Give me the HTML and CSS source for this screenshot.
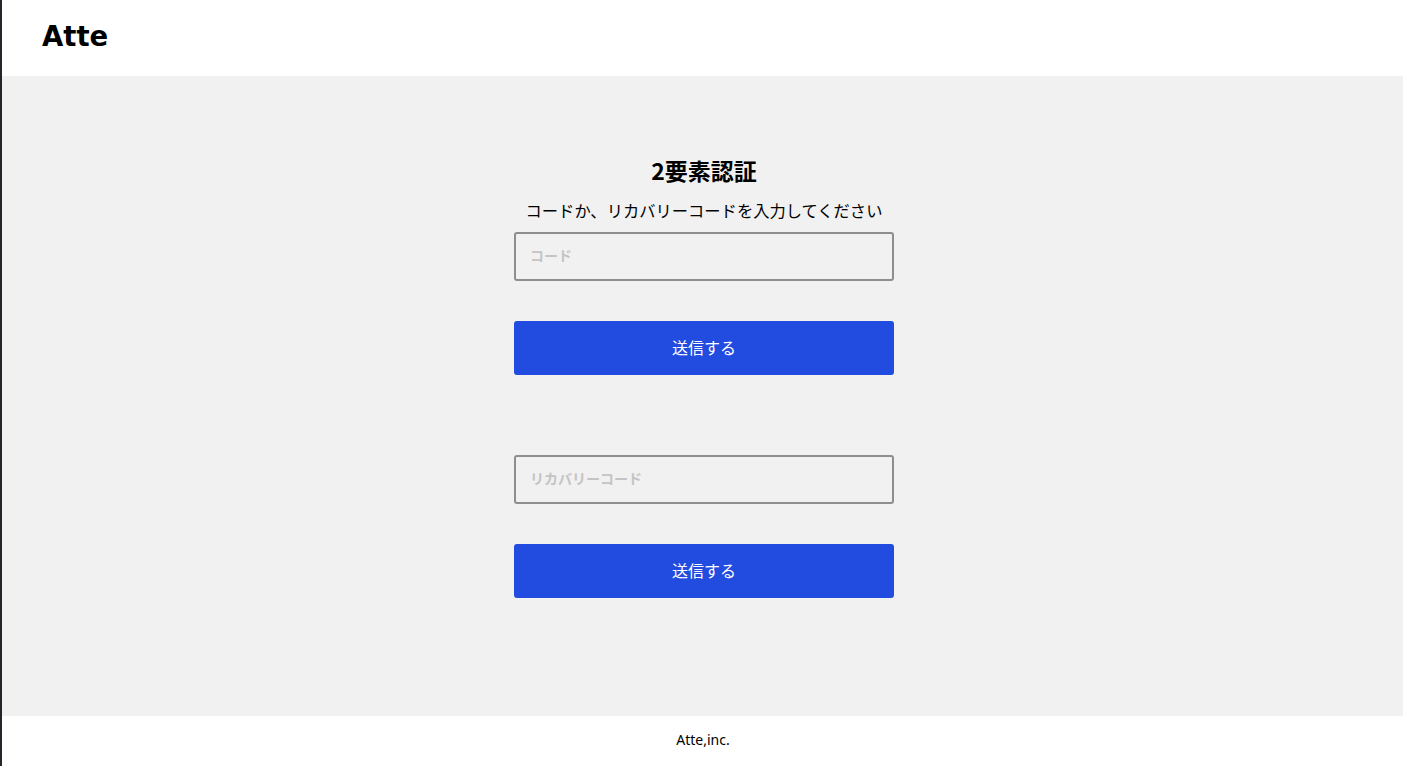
FILE: index.html
```html
<!DOCTYPE html>
<html lang="ja">
<head>
<meta charset="utf-8">
<title>Atte</title>
<link rel="stylesheet" href="styles.css">
</head>
<body>
<div class="page">
  <header class="header">
    <h1 class="logo">Atte</h1>
  </header>
  <main class="main">
    <div class="auth">
      <h2 class="auth__title">2要素認証</h2>
      <p class="auth__lead">コードか、リカバリーコードを入力してください</p>
      <form class="auth__form">
        <input class="auth__input" type="text" placeholder="コード">
        <button class="auth__button" type="button">送信する</button>
      </form>
      <form class="auth__form auth__form--recovery">
        <input class="auth__input" type="text" placeholder="リカバリーコード">
        <button class="auth__button" type="button">送信する</button>
      </form>
    </div>
  </main>
  <footer class="footer">
    <small class="footer__text">Atte,inc.</small>
  </footer>
</div>
</body>
</html>
```
FILE: styles.css
```css
* { box-sizing: border-box; }
html, body { margin: 0; padding: 0; }
body {
  background: #25252b;
  font-family: "Noto Sans CJK JP", "Noto Sans", sans-serif;
  color: #000;
}
.page {
  margin-left: 2px;
  height: 766px;
  display: flex;
  flex-direction: column;
  background: #fff;
}
.header {
  height: 76px;
  background: #fff;
  display: flex;
  align-items: center;
  padding-left: 40px;
}
.logo {
  margin: 0;
  font-family: "DejaVu Sans", sans-serif;
  font-weight: bold;
  font-size: 27.5px;
  letter-spacing: 0;
  line-height: 1;
  padding-bottom: 2px;
}
.main {
  flex: 1;
  background: #f1f1f1;
  display: flex;
  justify-content: center;
  padding-left: 3px;
}
.auth {
  width: 380px;
  padding-top: 79px;
  display: flex;
  flex-direction: column;
  align-items: center;
}
.auth__title {
  margin: 0;
  font-size: 23px;
  font-weight: bold;
  line-height: 30px;
}
.auth__lead {
  margin: 14px 0 0;
  font-size: 16.3px;
  line-height: 22px;
  white-space: nowrap;
}
.auth__form {
  width: 100%;
  margin-top: 11px;
  display: flex;
  flex-direction: column;
}
.auth__form--recovery { margin-top: 80px; }
.auth__input {
  width: 100%;
  height: 49px;
  border: 2px solid #8e8e8e;
  border-radius: 3px;
  background: #f1f1f1;
  padding: 0 14px 3px;
  font-family: inherit;
  font-size: 14px;
  font-weight: bold;
  outline: none;
}
.auth__input::placeholder { color: #c4c4c4; }
.auth__button {
  margin-top: 40px;
  width: 100%;
  height: 54px;
  border: none;
  border-radius: 3px;
  background: #224be0;
  color: #fff;
  font-family: inherit;
  font-size: 16px;
  padding: 0 0 3px;
  cursor: pointer;
}
.footer {
  height: 50px;
  background: #fff;
  display: flex;
  align-items: center;
  justify-content: center;
}
.footer__text {
  font-size: 14px;
  font-family: "Noto Sans", sans-serif;
  padding-left: 1px;
  padding-bottom: 3px;
}
```
